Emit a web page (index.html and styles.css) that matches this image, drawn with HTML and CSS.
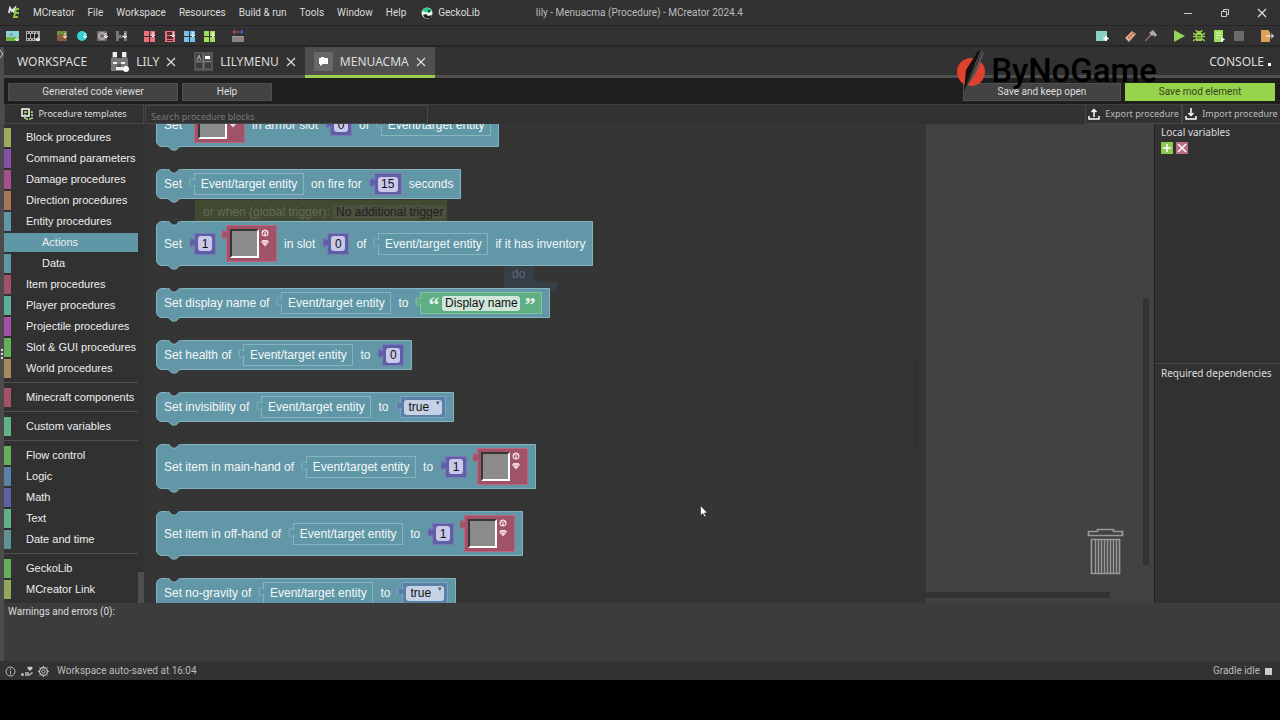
FILE: index.html
```
<!DOCTYPE html>
<html lang="en">
<head>
    <meta charset="UTF-8" />
    <title>lily - Menuacma (Procedure) - MCreator 2024.4</title>
    <link rel="stylesheet" href="styles.css">
</head>
<body>

<!-- shared shapes -->
<svg class="defs" aria-hidden="true">
  <symbol id="notch" viewBox="0 0 14 5"><path d="M0 0H14V.5H12L9 4H5L2 .5H0z" fill="#353535"/><path d="M1 .5H2L5 4H9L12 .5H13" fill="none" stroke="#86b5c1"/></symbol>
  <symbol id="bump" viewBox="0 0 14 5"><path d="M1 0H13L9 4H5z" fill="#6197a6"/><path d="M1 .5L5 4H9L13 .5" fill="none" stroke="#86b5c1"/></symbol>
  <symbol id="plug" viewBox="0 0 7 12"><path class="plug-shape" d="M6 1c0 6-5-5-5 4.600s5-1.500 5 4.400"/></symbol>
  <symbol id="close" viewBox="0 0 10 10"><path d="M1 1L9 9M9 1L1 9" fill="none" stroke="#ddd" stroke-width="1.200"/></symbol>
  <symbol id="grid4" viewBox="0 0 12 12"><path d="M0 1h5v5H0zM6 1h5v5H6zM0 7h5v5H0zM6 7h5v5H6z" fill="currentColor"/><path d="M9 2v5M7 5l2 2 2-2" stroke="#fff" fill="none"/></symbol>
  <symbol id="gem" viewBox="0 0 8 19"><circle cx="4" cy="4" r="3.500" fill="#f0d5dc"/><path d="M2.500 6V3.500L4 2.500l1.500 1V6M4 4v1" fill="none" stroke="#a0526a"/><path d="M1.500 11h5L8 13l-4 4.500L0 13z" fill="#f0d5dc"/><path d="M1 13.500h6" stroke="#c98a99" stroke-width=".6"/></symbol>
</svg>

<div class="app">

<header class="titlebar">
  <svg class="app-logo" width="14" height="13" viewBox="0 0 14 13"><path d="M2 7l1-5 2 3 3-3-1 5" fill="none" stroke="#ddd" stroke-width="2"/><path d="M12 3H9L7 11h4M8 7h4" fill="none" stroke="#8cc63f" stroke-width="2"/></svg>
  <nav class="menu">
    <button>MCreator</button>
    <button>File</button>
    <button>Workspace</button>
    <button>Resources</button>
    <button>Build &amp; run</button>
    <button>Tools</button>
    <button>Window</button>
    <button>Help</button>
    <button class="gecko"><svg width="12" height="12" viewBox="0 0 12 12"><circle cx="6" cy="6" r="5.500" fill="#e8f5ee"/><path d="M1 4a5.500 5.500 0 0 1 10 0L8 6 5 5z" fill="#35c98a"/><path d="M2 8l3-1 2 2 4-1-2 3H4z" fill="#222"/><circle cx="8" cy="4" r="1" fill="#111"/></svg>GeckoLib</button>
  </nav>
  <div class="window-title">lily - Menuacma (Procedure) - MCreator 2024.4</div>
  <div class="window-buttons">
    <button aria-label="Minimize"><svg width="10" height="10" viewBox="0 0 10 10"><path d="M1 5.500h8" stroke="#ccc"/></svg></button>
    <button aria-label="Restore"><svg width="10" height="10" viewBox="0 0 10 10"><path d="M1.500 3.500h5v5h-5zM3.500 3V1.500h5v5H7" fill="none" stroke="#ccc"/></svg></button>
    <button aria-label="Close"><svg width="10" height="10"><use href="#close"/></svg></button>
  </div>
</header>

<div class="toolbar">
  <div class="tools">
    <svg width="14" height="12" viewBox="0 0 14 12"><path d="M0 1h13v10H0z" fill="#87d6dc"/><path d="M0 7h13v4H0z" fill="#6fb340"/><path d="M3 3h4v3H3z" fill="#9aa5b5"/><path d="M11 7v4M9 9l2 2 2-2" stroke="#fff" fill="none"/></svg>
    <svg width="14" height="12" viewBox="0 0 14 12"><path d="M0 1h14v10H0z" fill="#aaa"/><path d="M1 4h3v4H1zM5 4h3v4H5zM9 4h3v4H9zM1 2h1v1H1zM4 2h1v1H4zM7 2h1v1H7zM10 2h1v1h-1zM1 9h1v1H1zM4 9h1v1H4zM7 9h1v1H7z" fill="#222"/><path d="M12 7v4M10 9l2 2 2-2" stroke="#fff" fill="none"/></svg>
  </div>
  <div class="tools">
    <svg width="12" height="12" viewBox="0 0 12 12"><path d="M1 1h10v10H1z" fill="#875b3d"/><path d="M1 1h10v3H9v1H6V4H3v1H1z" fill="#68913b"/><path d="M9 3v5M7 6l2 2 2-2" stroke="#fff" fill="none"/></svg>
    <svg width="12" height="12" viewBox="0 0 12 12"><circle cx="6" cy="6" r="5" fill="#35d0cf"/><path d="M9 3v5M7 6l2 2 2-2" stroke="#fff" fill="none"/></svg>
    <svg width="12" height="12" viewBox="0 0 12 12"><path d="M1 1h10v10H1z" fill="#776966"/><circle cx="6" cy="6" r="3" fill="none" stroke="#aaa" stroke-width="2"/><path d="M10 3v5M8 6l2 2 2-2" stroke="#fff" fill="none"/></svg>
    <svg width="12" height="12" viewBox="0 0 12 12"><path d="M0 1h3v4h5V1h3v10H8V8H3v3H0z" fill="#777"/><path d="M9 3v5M7 6l2 2 2-2" stroke="#fff" fill="none"/></svg>
  </div>
  <div class="tools">
    <svg class="red" width="12" height="12"><use href="#grid4"/></svg>
    <svg width="12" height="12" viewBox="0 0 12 12"><path d="M1 1h10v11H1z" fill="#e8717c"/><path d="M3 2h6v3H3zM3 6h6v3H3zM3 10h6v1H3z" fill="#532c31"/><path d="M9 2v5M7 5l2 2 2-2" stroke="#fff" fill="none"/></svg>
    <svg class="blue" width="12" height="12"><use href="#grid4"/></svg>
    <svg class="lime" width="12" height="12"><use href="#grid4"/></svg>
  </div>
  <div class="tools">
    <svg width="12" height="12" viewBox="0 0 12 12"><path d="M0 7h12v5H0z" fill="#8a8380"/><path d="M0 6h12v1H0z" fill="#a49b96"/><path d="M1 2h5M3 0L1 2l2 2" stroke="#e04848" fill="none"/><path d="M6 2h5M9 0l2 2-2 2" stroke="#4870e0" fill="none"/></svg>
  </div>
  <div class="tools run-tools">
    <svg width="13" height="12" viewBox="0 0 13 12"><path d="M0 1h11v10H0z" fill="#84d3c4"/><path d="M10 6v5M7.500 8.500h5" stroke="#fff" stroke-width="2"/></svg>
    <svg class="spaced" width="12" height="12" viewBox="0 0 12 12"><path d="M0 8l7-7 4 3-7 8z" fill="#e2aa85"/><path d="M3 7l2 1M5 5l2 1M7 3l2 1" stroke="#7a4c35"/></svg>
    <svg width="12" height="12" viewBox="0 0 12 12"><path d="M0 11l7-7" stroke="#926e5c" stroke-width="1.500"/><path d="M4 3l4-3 4 5-2 2-2-2-1 1z" fill="#aaa"/></svg>
    <svg class="spaced" width="12" height="12" viewBox="0 0 12 12"><path d="M1 0l11 6-11 6z" fill="#93d35b"/></svg>
    <svg width="12" height="12" viewBox="0 0 12 12"><path d="M3 3h6v8H3zM4 1h4v2H4z" fill="#97d34a"/><path d="M0 3l3 2M0 6.500h3M0 11l3-2M12 3L9 5M12 6.500H9M12 11L9 9M3 0l1 2M9 0L8 2" stroke="#97d34a" stroke-width="1.500"/><path d="M4 5.500h4M4 8h4" stroke="#343"/></svg>
    <svg width="12" height="12" viewBox="0 0 12 12"><path d="M1 0h9v12H1z" fill="#9ee05a"/><path d="M3 3h5M3 5.500h5M3 8h4" stroke="#d9f5b8"/><path d="M8 7l4 2.500L8 12z" fill="#fff"/></svg>
    <svg width="12" height="12" viewBox="0 0 12 12"><path d="M1 1h10v10H1z" fill="#6a6a6a"/></svg>
    <svg class="spaced" width="13" height="12" viewBox="0 0 13 12"><path d="M0 0h7l2 2v10H0z" fill="#dba05a"/><path d="M5 6h7M10 3.500L12.500 6 10 8.500" stroke="#fff" fill="none"/></svg>
  </div>
</div>

<div class="main">
<div class="side-strip">
  <svg width="4" height="10" viewBox="0 0 4 10"><path d="M0 1l3 4-3 4" fill="none" stroke="#ccc"/></svg>
  <svg class="grip" width="4" height="11" viewBox="0 0 4 11"><path d="M1 0h2v2H1zM1 4h2v2H1zM1 8h2v2H1z" fill="#ddd"/></svg>
</div>
<div class="content">

<div class="tabs">
  <button class="tab">WORKSPACE</button>
  <button class="tab"><svg width="19" height="20" viewBox="0 0 19 20"><path d="M2 0h5v6h5V0h5v6h1v13H1V6h1z" fill="#777"/><path d="M7 0h5v5H7z" fill="#323232"/><path d="M3 0h4v5H3zM12 0h4v5h-4zM3 10h4v2H3zM11 10h4v2h-4zM6 15h7v3H6z" fill="#eee"/><path d="M7 12h4v3H7z" fill="#555"/><circle cx="16" cy="17" r="3" fill="#fff"/></svg>LILY<svg width="10" height="10"><use href="#close"/></svg></button>
  <button class="tab"><svg width="19" height="19" viewBox="0 0 19 19"><path d="M0 0h19v19H0z" fill="#555"/><path d="M2 2h6v6H2zM2 11h6v5H2zM11 11h6v5h-6z" fill="#3c3c3c"/><path d="M11 4h5v3h-5z" fill="#fff"/><path d="M3 8l2-5 2 5M4 6h2" fill="none" stroke="#aaa"/><path d="M2 9.500h15M9.500 2v15" stroke="#777"/></svg>LILYMENU<svg width="10" height="10"><use href="#close"/></svg></button>
  <button class="tab active"><svg width="19" height="19" viewBox="0 0 19 19"><path d="M0 0h19v19H0z" fill="#686868"/><path d="M5 6h2V5h3v1h4v6h-5l-3 2v-2H5z" fill="#fff"/></svg>MENUACMA<svg width="10" height="10"><use href="#close"/></svg></button>
  <button class="tab console">CONSOLE<span class="dot"></span></button>
</div>

<div class="actions">
  <button class="action viewer">Generated code viewer</button>
  <button class="action help">Help</button>
  <button class="action keep">Save and keep open</button>
  <button class="action save">Save mod element</button>
</div>

<div class="procbar">
  <button class="proc-btn templates"><svg width="12" height="12" viewBox="0 0 12 12"><path d="M1 1h7v7H1z" fill="none" stroke="#fff" stroke-width="1.500"/><path d="M4 4h7v7H4z" fill="none" stroke="#bde08a" stroke-width="1.500" stroke-dasharray="2 1"/></svg>Procedure templates</button>
  <input class="search" type="text" aria-label="Search procedure blocks" placeholder="Search procedure blocks">
  <button class="proc-btn export"><svg width="12" height="12" viewBox="0 0 12 12"><path d="M1 8v3h10V8M6 9V2M3.500 4L6 1.500 8.500 4" fill="none" stroke="#fff" stroke-width="1.500"/></svg>Export procedure</button>
  <button class="proc-btn import"><svg width="12" height="12" viewBox="0 0 12 12"><path d="M1 8v3h10V8M6 0v7M3.500 5L6 7.500 8.500 5" fill="none" stroke="#fff" stroke-width="1.500"/></svg>Import procedure</button>
</div>

<div class="editor">
  <aside class="categories">
    <ul>
      <li class="c-block">Block procedures</li>
      <li class="c-command">Command parameters</li>
      <li class="c-damage">Damage procedures</li>
      <li class="c-direction">Direction procedures</li>
      <li class="c-entity">Entity procedures</li>
      <li class="c-entity sub selected">Actions</li>
      <li class="c-entity sub">Data</li>
      <li class="c-item">Item procedures</li>
      <li class="c-player">Player procedures</li>
      <li class="c-projectile">Projectile procedures</li>
      <li class="c-slot">Slot &amp; GUI procedures</li>
      <li class="c-world">World procedures</li>
      <li class="c-minecraft first">Minecraft components</li>
      <li class="c-text first">Custom variables</li>
      <li class="c-slot first">Flow control</li>
      <li class="c-logic">Logic</li>
      <li class="c-math">Math</li>
      <li class="c-text">Text</li>
      <li class="c-date">Date and time</li>
      <li class="c-slot first">GeckoLib</li>
      <li class="c-link">MCreator Link</li>
    </ul>
    <span class="tree-scroll"></span>
  </aside>

  <div class="canvas">
    <div class="flyout-bg"></div>
    <div class="ghost trigger">or when (global trigger): <span>No additional trigger</span></div>
    <div class="ghost do">do</div>
    <div class="ghost do-arm"></div>
    <div class="scroll flyout-scroll"></div>
    <div class="scroll v-scroll"></div>
    <div class="scroll h-scroll"></div>

    <div class="flyout">
      <div class="block tall"><svg class="notch"><use href="#notch"/></svg>
        <span>Set</span>
        <div class="value item"><svg class="plug"><use href="#plug"/></svg><button aria-label="Select item"></button><svg class="gem"><use href="#gem"/></svg></div>
        <span>in armor slot</span>
        <div class="value number"><svg class="plug"><use href="#plug"/></svg><input type="text" aria-label="Slot" value="0"></div>
        <span>of</span>
        <div class="value entity"><svg class="plug"><use href="#plug"/></svg>Event/target entity</div>
        <svg class="bump"><use href="#bump"/></svg></div>

      <div class="block"><svg class="notch"><use href="#notch"/></svg>
        <span>Set</span>
        <div class="value entity"><svg class="plug"><use href="#plug"/></svg>Event/target entity</div>
        <span>on fire for</span>
        <div class="value number wide"><svg class="plug"><use href="#plug"/></svg><input type="text" aria-label="Seconds" value="15"></div>
        <span>seconds</span>
        <svg class="bump"><use href="#bump"/></svg></div>

      <div class="block tall"><svg class="notch"><use href="#notch"/></svg>
        <span>Set</span>
        <div class="value number"><svg class="plug"><use href="#plug"/></svg><input type="text" aria-label="Amount" value="1"></div>
        <div class="value item"><svg class="plug"><use href="#plug"/></svg><button aria-label="Select item"></button><svg class="gem"><use href="#gem"/></svg></div>
        <span>in slot</span>
        <div class="value number"><svg class="plug"><use href="#plug"/></svg><input type="text" aria-label="Slot" value="0"></div>
        <span>of</span>
        <div class="value entity"><svg class="plug"><use href="#plug"/></svg>Event/target entity</div>
        <span>if it has inventory</span>
        <svg class="bump"><use href="#bump"/></svg></div>

      <div class="block"><svg class="notch"><use href="#notch"/></svg>
        <span>Set display name of</span>
        <div class="value entity"><svg class="plug"><use href="#plug"/></svg>Event/target entity</div>
        <span>to</span>
        <div class="value text"><svg class="plug"><use href="#plug"/></svg><b>“</b><input type="text" aria-label="Name" value="Display name"><b>”</b></div>
        <svg class="bump"><use href="#bump"/></svg></div>

      <div class="block"><svg class="notch"><use href="#notch"/></svg>
        <span>Set health of</span>
        <div class="value entity"><svg class="plug"><use href="#plug"/></svg>Event/target entity</div>
        <span>to</span>
        <div class="value number"><svg class="plug"><use href="#plug"/></svg><input type="text" aria-label="Health" value="0"></div>
        <svg class="bump"><use href="#bump"/></svg></div>

      <div class="block"><svg class="notch"><use href="#notch"/></svg>
        <span>Set invisibility of</span>
        <div class="value entity"><svg class="plug"><use href="#plug"/></svg>Event/target entity</div>
        <span>to</span>
        <div class="value logic"><svg class="plug"><use href="#plug"/></svg><select aria-label="Invisible"><option>true</option><option>false</option></select><i>▾</i></div>
        <svg class="bump"><use href="#bump"/></svg></div>

      <div class="block tall"><svg class="notch"><use href="#notch"/></svg>
        <span>Set item in main-hand of</span>
        <div class="value entity"><svg class="plug"><use href="#plug"/></svg>Event/target entity</div>
        <span>to</span>
        <div class="value number"><svg class="plug"><use href="#plug"/></svg><input type="text" aria-label="Amount" value="1"></div>
        <div class="value item"><svg class="plug"><use href="#plug"/></svg><button aria-label="Select item"></button><svg class="gem"><use href="#gem"/></svg></div>
        <svg class="bump"><use href="#bump"/></svg></div>

      <div class="block tall"><svg class="notch"><use href="#notch"/></svg>
        <span>Set item in off-hand of</span>
        <div class="value entity"><svg class="plug"><use href="#plug"/></svg>Event/target entity</div>
        <span>to</span>
        <div class="value number"><svg class="plug"><use href="#plug"/></svg><input type="text" aria-label="Amount" value="1"></div>
        <div class="value item"><svg class="plug"><use href="#plug"/></svg><button aria-label="Select item"></button><svg class="gem"><use href="#gem"/></svg></div>
        <svg class="bump"><use href="#bump"/></svg></div>

      <div class="block"><svg class="notch"><use href="#notch"/></svg>
        <span>Set no-gravity of</span>
        <div class="value entity"><svg class="plug"><use href="#plug"/></svg>Event/target entity</div>
        <span>to</span>
        <div class="value logic"><svg class="plug"><use href="#plug"/></svg><select aria-label="No gravity"><option>true</option><option>false</option></select><i>▾</i></div>
        <svg class="bump"><use href="#bump"/></svg></div>
    </div>

    <svg class="trash" width="37" height="47" viewBox="0 0 37 47"><g fill="none" stroke="#999"><path d="M1.500 7.500v-4h9v-2h16v2h9v4z" stroke-width="1.700"/><path d="M4.500 11.500h28v34h-28z" stroke-width="1.700"/><path d="M8.500 12v33M11.500 12v33M14.500 12v33M17.500 12v33M20.500 12v33M23.500 12v33M26.500 12v33M29.500 12v33" stroke-width="1.500"/></g></svg>
  </div>

  <aside class="panel">
    <section>
      <h2>Local variables</h2>
      <button class="var-btn add" aria-label="Add variable"><svg width="12" height="12" viewBox="0 0 12 12"><path d="M6 2v8M2 6h8" stroke="#fff" stroke-width="1.500"/></svg></button>
      <button class="var-btn remove" aria-label="Remove variable"><svg width="12" height="12" viewBox="0 0 12 12"><path d="M2 2l8 8M10 2l-8 8" stroke="#fff" stroke-width="1.500"/></svg></button>
    </section>
    <section>
      <h2>Required dependencies</h2>
    </section>
  </aside>
</div>

<div class="warnings">Warnings and errors (0):</div>

</div>
</div>

<footer class="status">
  <svg width="11" height="11" viewBox="0 0 11 11"><circle cx="5.500" cy="5.500" r="4.500" fill="none" stroke="#bbb"/><path d="M5.500 5v3.500M5.500 2.500v1.500" stroke="#bbb"/></svg>
  <svg width="12" height="11" viewBox="0 0 12 11"><circle cx="1.500" cy="8.500" r="1.500" fill="#bbb"/><path d="M4 9h4l3.500-2.500M4 7h4" fill="none" stroke="#bbb" stroke-width="1.500"/><path d="M9 5L6.500 2.500a1.300 1.300 0 0 1 2.500-1 1.300 1.300 0 0 1 2.500 1z" fill="#ccc"/></svg>
  <svg width="11" height="11" viewBox="0 0 11 11"><circle cx="5.500" cy="5.500" r="4" fill="none" stroke="#bbb" stroke-width="1.300"/><circle cx="5.500" cy="5.500" r="1.700" fill="none" stroke="#bbb"/><path d="M5.500 0v2M5.500 9v2M0 5.500h2M9 5.500h2M1.500 1.500l1.500 1.500M8 8l1.500 1.500M9.500 1.500L8 3M3 8L1.500 9.500" stroke="#bbb"/></svg>
  <span class="saved">Workspace auto-saved at 16:04</span>
  <span class="gradle">Gradle idle</span>
  <span class="idle"></span>
</footer>

</div>

<div class="sponsor">
  <svg width="30" height="42" viewBox="0 0 30 42"><circle cx="15" cy="22" r="14" fill="#e0402f"/><path d="M8 41L10 20 22 1l3-1z" fill="#111"/><path d="M8 41L25 0l3 3-8 20z" fill="#555"/><path d="M8 41L26 2" stroke="#222"/></svg>
  <span>ByNoGame</span>
</div>

<svg class="cursor" width="8" height="13" viewBox="0 0 8 13"><path d="M.5.500v10l2.300-2 1.700 3.500 1.500-.7L4.400 8h3z" fill="#fff" stroke="#222" stroke-width=".6"/></svg>

</body>
</html>
```
FILE: styles.css
```
* {
  box-sizing: border-box;
}
body {
  margin: 0;
  background: #000;
  color: #ddd;
  font-family: Roboto, sans-serif;
  font-size: 10px;
  line-height: 16px;
  overflow: hidden;
}
button, input, select {
  font: inherit;
  color: inherit;
  border: none;
  border-radius: 0;
  background: none;
  padding: 0;
  margin: 0;
  outline: none;
}
svg {
  display: block;
  flex: none;
}
.defs {
  position: absolute;
  width: 0;
  height: 0;
}
.app {
  display: flex;
  flex-direction: column;
  height: calc(100vh - 40px);
  background: #323232;
}

/* title bar and menu */
.titlebar {
  display: flex;
  align-items: center;
  height: 26px;
  padding: 0 8px 0 7px;
  border-bottom: 1px solid #262626;
}
.menu {
  display: flex;
  gap: 13px;
  margin-left: 12px;
  flex: none;
}
.gecko {
  display: flex;
  align-items: center;
  gap: 5px;
  margin-left: 2px;
}
.window-title {
  flex: 1;
  margin-left: 56px;
  color: #bbb;
}
.window-buttons {
  display: flex;
  gap: 16px;
}
.window-buttons button {
  width: 21px;
  display: flex;
  justify-content: center;
}

/* icon toolbar */
.toolbar {
  display: flex;
  align-items: center;
  gap: 16px;
  height: 21px;
  padding: 0 6px;
  border-bottom: 2px solid #262626;
}
.tools {
  display: flex;
  align-items: center;
  gap: 8px;
}
.tools:first-child {
  gap: 6px;
}
.run-tools {
  margin-left: auto;
}
.run-tools .spaced {
  margin-left: 8px;
}
.red { color: #e8717c; }
.blue { color: #73c2ee; }
.lime { color: #a2e05c; }

.main {
  display: flex;
  flex: 1;
  min-height: 0;
}
.side-strip {
  width: 4px;
  padding-top: 2px;
  background: #4c4c4c;
}
.grip {
  margin-top: 290px;
}
.content {
  flex: 1;
  min-width: 0;
  display: flex;
  flex-direction: column;
}

/* tabs */
.tabs {
  display: flex;
  height: 32px;
  border-bottom: 1px solid #1e1e1e;
  font-family: "Noto Sans", sans-serif;
}
.tab {
  display: flex;
  align-items: center;
  gap: 7px;
  padding: 1px 9px 0;
  font-size: 12px;
  border-bottom: 3px solid #4f4f4f;
}
.tab:first-child {
  padding-left: 13px;
  padding-right: 14px;
}
.tab.active {
  background: #4f4f4f;
  border-bottom-color: #99cf4b;
}
.tab.console {
  flex: 1;
  gap: 4px;
  justify-content: flex-end;
}
.dot {
  width: 3px;
  height: 3px;
  margin-top: 6px;
  background: #fff;
}

/* editor buttons */
.actions {
  display: flex;
  gap: 4px;
  height: 25px;
  padding: 4px 5px 3px 4px;
  background: #1e1e1e;
}
.action {
  background: #434343;
  border: 1px solid #505050;
  line-height: 16px;
}
.viewer { width: 170px; }
.help { width: 90px; }
.keep {
  width: 158px;
  margin-left: auto;
}
.save {
  width: 150px;
  background: #97d34b;
  border-color: #97d34b;
  color: #34451f;
}
.procbar {
  display: flex;
  height: 20px;
  border-top: 1px solid #3e3e3e;
  font-family: "Noto Sans", sans-serif;
  font-size: 9px;
}
.proc-btn {
  display: flex;
  align-items: center;
  justify-content: center;
  gap: 5px;
  border: 1px solid #484848;
  border-top: none;
  color: #bbb;
  white-space: nowrap;
}
.templates {
  width: 140px;
  color: #ddd;
}
.search {
  width: 283px;
  margin-left: 1px;
  padding: 5px 5px 0;
  border: 1px solid #484848;
}
.search::placeholder {
  color: #777;
}
.export {
  width: 97px;
  margin-left: auto;
}
.import {
  width: 98px;
  border-right: none;
}

/* category tree */
.editor {
  display: flex;
  flex: 1;
  min-height: 0;
}
.categories {
  position: relative;
  width: 141px;
  background: #313131;
  font-family: "Liberation Sans", Arial, sans-serif;
  font-size: 11px;
  color: #eee;
  overflow: hidden;
}
.categories ul {
  list-style: none;
  margin: 4px 7px 0 0;
  padding: 0;
}
.categories li {
  height: 19px;
  line-height: 18px;
  margin-bottom: 2px;
  padding-left: 15px;
  border-left: 7px solid;
  border-left-color: var(--c);
  white-space: nowrap;
}
.categories li.sub {
  padding-left: 31px;
}
.categories li.selected {
  background: var(--c);
}
.categories li.first {
  position: relative;
  margin-top: 10px;
}
.categories li.first::before {
  content: "";
  position: absolute;
  left: -7px;
  right: 0;
  top: -6px;
  border-top: 1px solid #505050;
}
.c-block { --c: #a0aa5c; }
.c-command { --c: #8650a6; }
.c-damage { --c: #a6508e; }
.c-direction { --c: #a6755c; }
.c-entity { --c: #5f97a7; }
.c-item { --c: #a15169; }
.c-player { --c: #5fb09a; }
.c-projectile { --c: #a64fa6; }
.c-slot { --c: #66b05c; }
.c-world { --c: #a68b5f; }
.c-minecraft { --c: #a65266; }
.c-text { --c: #60b088; }
.c-logic { --c: #5b80a8; }
.c-math { --c: #5f5fa6; }
.c-date { --c: #5f9393; }
.c-link { --c: #94a85c; }
.tree-scroll {
  position: absolute;
  right: 1px;
  bottom: 0;
  width: 6px;
  height: 31px;
  background: #4f4f4f;
}

/* canvas */
.canvas {
  position: relative;
  flex: 1;
  background: #424242;
  overflow: hidden;
  font-family: "Liberation Sans", Arial, sans-serif;
  font-size: 12px;
}
.flyout-bg {
  position: absolute;
  inset: 0 auto 0 0;
  width: 781px;
  background: #353535;
}
.ghost {
  position: absolute;
  color: #666b57;
}
.trigger {
  left: 50px;
  top: 76px;
  width: 252px;
  height: 24px;
  padding: 4px 8px;
  background: #414930;
  white-space: nowrap;
}
.trigger span {
  padding: 0 3px;
  border-radius: 3px;
  background: #4b503f;
  color: #1e1e1e;
}
.do {
  left: 359px;
  top: 142px;
  width: 30px;
  height: 25px;
  padding-left: 8px;
  background: #363e48;
  color: #626b76;
}
.do-arm {
  left: 359px;
  top: 158px;
  width: 53px;
  height: 9px;
  background: #363e48;
}
.scroll {
  position: absolute;
  background: #333;
  border-radius: 1px;
}
.flyout-scroll {
  left: 769px;
  top: 237px;
  width: 5px;
  height: 88px;
  background: #303030;
}
.v-scroll {
  right: 5px;
  top: 174px;
  width: 6px;
  bottom: 38px;
}
.h-scroll {
  left: 359px;
  right: 44px;
  bottom: 5px;
  height: 6px;
}
.trash {
  position: absolute;
  right: 30px;
  bottom: 28px;
}

/* the list is scrolled, so its first block is cut by the top edge */
.flyout {
  position: relative;
  display: flex;
  flex-direction: column;
  align-items: flex-start;
  gap: 22px;
  margin: -22px 0 0 11px;
  color: #f4f8f9;
}
.block {
  position: relative;
  display: flex;
  align-items: center;
  gap: 7px;
  height: 30px;
  padding: 0 7px;
  background: #6197a6;
  border: 1px solid #86b5c1;
  border-radius: 6px 0 0 6px;
  white-space: nowrap;
}
.block.tall {
  height: 45px;
}
.notch, .bump {
  position: absolute;
  left: 10px;
  width: 14px;
  height: 5px;
}
.notch { top: -1px; }
.bump { bottom: -5px; }
.value {
  position: relative;
  display: flex;
  align-items: center;
  justify-content: center;
  height: 22px;
  margin-left: 5px;
  background: var(--fill);
  border: 1px solid var(--edge);
}
.value + .value {
  margin-left: 3px;
}
.plug {
  position: absolute;
  left: -6px;
  top: 3px;
  width: 7px;
  height: 12px;
}
.plug-shape {
  fill: var(--fill);
  stroke: var(--edge);
}
.value input {
  height: 15px;
  border-radius: 3px;
  text-align: center;
  color: #111;
}
.entity {
  --fill: #5f97a7;
  --edge: #86b5c1;
  width: 110px;
}
.number {
  --fill: #5f5fa6;
  --edge: #7a78b8;
  width: 22px;
}
.number.wide { width: 28px; }
.number input {
  width: 14px;
  background: #cac8ea;
}
.number.wide input { width: 20px; }
.item {
  --fill: #a05269;
  --edge: #bb667b;
  width: 51px;
  height: 37px;
  gap: 2px;
  justify-content: flex-start;
  align-items: flex-start;
  padding: 3px;
}
.item button {
  width: 29px;
  height: 29px;
  background: #8b8b8b;
  border: 2px solid;
  border-color: #373737 #fff #fff #373737;
}
.gem {
  width: 8px;
  height: 19px;
}
.text {
  --fill: #5fae84;
  --edge: #83c49f;
  width: 122px;
  gap: 4px;
}
.text input {
  width: 78px;
  background: #cfe6da;
}
.text b {
  width: 10px;
  height: 16px;
  font: bold 22px/20px "Liberation Serif", serif;
  color: #e4f4ec;
  text-align: center;
}
.logic {
  --fill: #5b80a8;
  --edge: #80a2c6;
  width: 46px;
}
.logic select {
  width: 38px;
  height: 15px;
  padding: 0 4px;
  appearance: none;
  border-radius: 3px;
  background: #c5d1e5;
  color: #111;
  line-height: 15px;
}
.logic i {
  position: absolute;
  right: 6px;
  top: 2px;
  font: 7px/8px "DejaVu Sans", sans-serif;
  color: #4c5c75;
  pointer-events: none;
}

/* right panel */
.panel {
  display: flex;
  flex-direction: column;
  width: 126px;
  background: #313131;
  border-left: 1px solid #222;
  font-family: "Noto Sans", sans-serif;
}
.panel section {
  flex: 1;
  padding: 0 6px;
}
.panel section + section {
  border-top: 1px solid #484848;
  padding-top: 1px;
}
.panel h2 {
  margin: 0;
  font-size: 10px;
  font-weight: normal;
  white-space: nowrap;
}
.var-btn {
  display: inline-block;
  vertical-align: top;
  width: 12px;
  height: 12px;
  margin-top: 2px;
}
.add { background: #8cc94e; }
.remove { background: #b96c7c; }

.warnings {
  height: 58px;
  padding: 1px 0 0 4px;
  background: #3c3c3c;
}

/* status bar */
.status {
  display: flex;
  align-items: center;
  gap: 5px;
  height: 19px;
  padding: 1px 8px 0 5px;
  color: #bbb;
}
.saved {
  margin-left: 3px;
}
.gradle {
  margin-left: auto;
}
.idle {
  width: 7px;
  height: 7px;
  background: #ccc;
}

/* overlays */
.sponsor {
  position: absolute;
  right: 123px;
  top: 50px;
  display: flex;
  align-items: center;
  gap: 5px;
  font: 500 33px/42px Roboto, sans-serif;
  color: #000;
  pointer-events: none;
}
.cursor {
  position: absolute;
  left: 700px;
  top: 505px;
}
```
